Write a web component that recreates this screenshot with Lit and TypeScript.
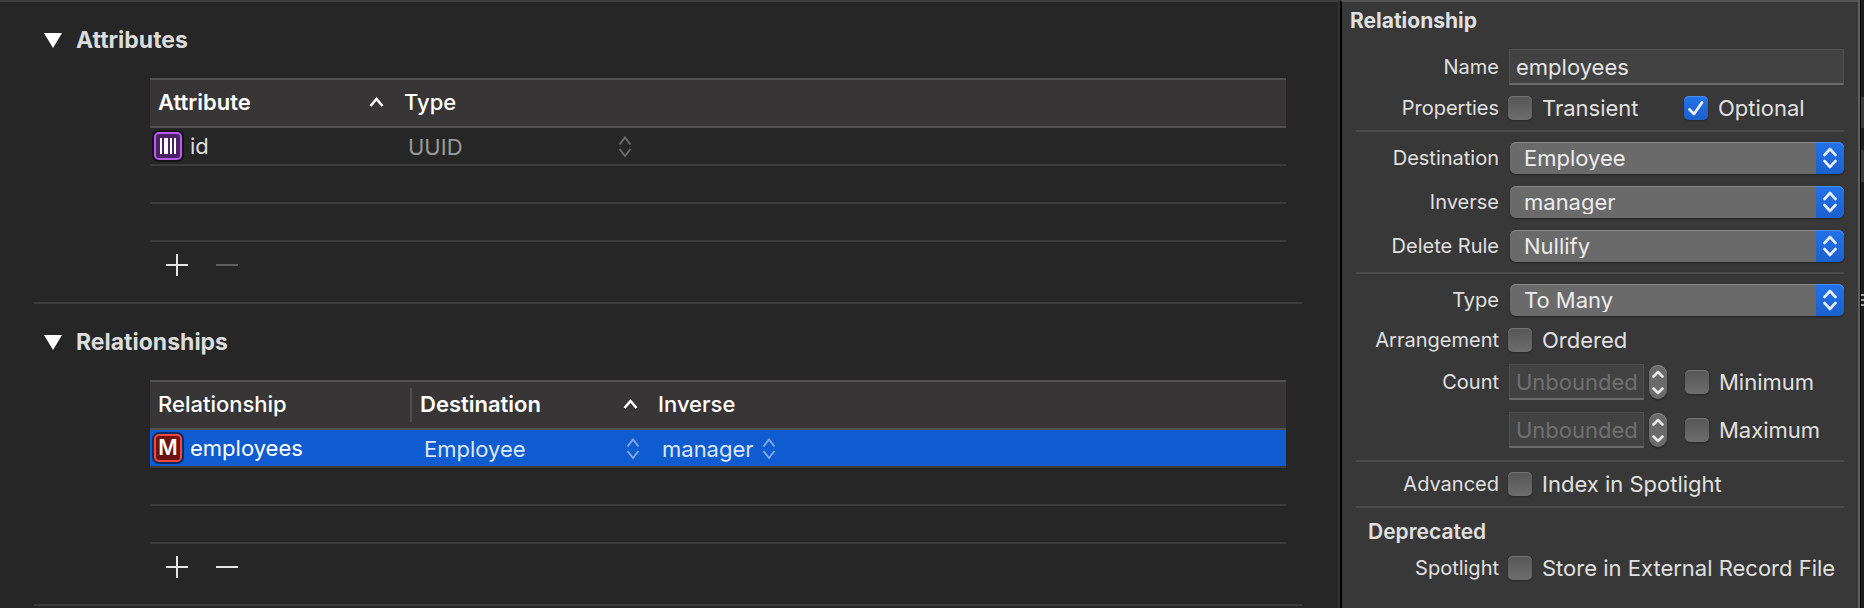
import { LitElement, html, css, svg, nothing } from "lit";
import { customElement, property, state } from "lit/decorators.js";

type Kind = "id" | "many";

const popupChevrons = html`<svg class="chevrons" viewBox="0 0 14 22" width="14" height="22" aria-hidden="true">
  <path d="M1.5 8.5 L7 1.5 L12.5 8.5 M1.5 13 L7 20 L12.5 13" />
</svg>`;

const sortMark = html`<svg class="sort" viewBox="0 0 15 10" width="15" height="10" aria-hidden="true">
  <path d="M1.5 9 L7.5 2 L13.5 9" />
</svg>`;

@customElement("kind-badge")
export class KindBadge extends LitElement {
  static styles = css`
    :host { display: block; flex: none; }
    .badge {
      box-sizing: border-box; width: 28px; height: 28px; border: 2px solid; border-radius: 5px;
      box-shadow: 0 0 0 2px rgba(0, 0, 0, 0.5);
      display: flex; align-items: center; justify-content: center;
      color: #fff; font: 600 21px/24px Inter, "Open Sans", sans-serif;
    }
    .id { border-color: #b95cf0; background: #4a2163; }
    .many { border-color: #fd453c; background: #6a1512; }
    .letter { color: #fff; }
    svg { display: block; }
  `;
  @property() kind: Kind = "id";
  render() {
    return this.kind === "id"
      ? html`<div class="badge id"><svg viewBox="0 0 16 16" width="16" height="16" fill="#fff" aria-hidden="true">
          ${svg`<rect width="2" height="16"/><rect x="4" width="4" height="16"/><rect x="10" width="2" height="16"/><rect x="14" width="2" height="16"/>`}
        </svg></div>`
      : html`<div class="badge many"><span class="letter">M</span></div>`;
  }
}

@customElement("entity-section")
export class EntitySection extends LitElement {
  static styles = css`
    :host { display: block; }
    .section { margin: 0 36px 0 34px; padding: 22px 0 26px; border-bottom: 2px solid #3c3c3c; }
    .heading {
      margin: 0 0 22px 10px; display: flex; align-items: center; gap: 14px; height: 32px;
      font-size: 23px; font-weight: 700; color: #dcdcdc;
    }
    .disclosure, .tool { border: 0; padding: 0; background: none; color: inherit; display: block; }
    .disclosure svg, .tool svg { display: block; }
    .body { margin: 0 16px 0 116px; }
    table { width: 100%; table-layout: fixed; border-collapse: separate; border-spacing: 0; }
    .narrow { width: 246px; }
    .wide { width: 262px; }
    .middle { width: 238px; }
    th {
      height: 46px; padding: 0 12px 0 8px; text-align: left; background: #383536; color: #fff;
      border-top: 2px solid #515051; border-bottom: 2px solid #515051;
      font-size: 22px; font-weight: 500;
    }
    .head {
      box-sizing: border-box; display: flex; align-items: center; justify-content: space-between;
      height: 34px; padding-bottom: 2px;
    }
    .sorted { font-weight: 600; }
    .ruled { padding-right: 0; }
    .ruled .head { border-right: 2px solid #515051; }
    td { height: 36px; padding: 0; border-bottom: 2px solid #3b3b3b; color: #dfdfdf; }
    .selected td { background: #0f5bd0; color: #fff; }
    .sort path { fill: none; stroke: #fff; stroke-width: 2.6; }
    .name { display: flex; align-items: center; gap: 8px; padding-left: 4px; height: 36px; }
    .popup { display: grid; align-items: center; margin: 2px 10px 0 12px; height: 34px; color: #9a9a9a; }
    .selected .popup { color: #dce7f8; }
    .popup > * { grid-area: 1 / 1; }
    .popup select {
      appearance: none; border: 0; margin: 0; padding: 0; background: none; color: inherit;
      font: inherit; width: 100%; min-width: 0; opacity: 1;
    }
    .chevrons { justify-self: end; pointer-events: none; }
    .chevrons path { fill: none; stroke: #6c6c6c; stroke-width: 2; }
    .selected .chevrons path { stroke: #7fa8e8; }
    .span-type { width: 224px; }
    .span-inverse { width: 114px; }
    .tools { display: flex; gap: 28px; padding: 12px 0 0 16px; color: #e6e6e6; }
    .tool:disabled { color: #5e5e5e; }
  `;
  @property() kind: Kind = "id";
  @state() private open = true;

  private cellPopup(label: string, value: string, span = "") {
    return html`<div class="popup ${span}">
      <select aria-label=${label}><option>${value}</option></select>${popupChevrons}
    </div>`;
  }

  private attributes() {
    return html`<table>
      <colgroup><col class="narrow" /><col /></colgroup>
      <thead><tr>
        <th><div class="head sorted">Attribute${sortMark}</div></th>
        <th><div class="head">Type</div></th>
      </tr></thead>
      <tbody>
        <tr><td><div class="name"><kind-badge kind="id"></kind-badge>id</div></td>
          <td>${this.cellPopup("Type", "UUID", "span-type")}</td></tr>
        <tr><td></td><td></td></tr>
        <tr><td></td><td></td></tr>
      </tbody>
    </table>`;
  }

  private relationships() {
    return html`<table>
      <colgroup><col class="wide" /><col class="middle" /><col /></colgroup>
      <thead><tr>
        <th class="ruled"><div class="head">Relationship</div></th>
        <th><div class="head sorted">Destination${sortMark}</div></th>
        <th><div class="head">Inverse</div></th>
      </tr></thead>
      <tbody>
        <tr class="selected"><td><div class="name"><kind-badge kind="many"></kind-badge>employees</div></td>
          <td>${this.cellPopup("Destination", "Employee")}</td>
          <td>${this.cellPopup("Inverse", "manager", "span-inverse")}</td></tr>
        <tr><td></td><td></td><td></td></tr>
        <tr><td></td><td></td><td></td></tr>
      </tbody>
    </table>`;
  }

  render() {
    const isId = this.kind === "id";
    return html`<section class="section">
      <h2 class="heading">
        <button class="disclosure" aria-label="Toggle section" aria-expanded=${this.open} @click=${() => (this.open = !this.open)}>
          <svg viewBox="0 0 18 15" width="18" height="15" aria-hidden="true"><path d="M0 0H18L9 15Z" fill="#fff" /></svg>
        </button>
        ${isId ? "Attributes" : "Relationships"}
      </h2>
      ${this.open
        ? html`<div class="body">
            ${isId ? this.attributes() : this.relationships()}
            <div class="tools">
              <button class="tool" aria-label="Add">
                <svg viewBox="0 0 22 22" width="22" height="22"><path d="M0 11H22M11 0V22" stroke="currentColor" stroke-width="2" /></svg>
              </button>
              <button class="tool" aria-label="Remove" ?disabled=${isId}>
                <svg viewBox="0 0 22 22" width="22" height="22"><path d="M0 11H22" stroke="currentColor" stroke-width="2" /></svg>
              </button>
            </div>
          </div>`
        : nothing}
    </section>`;
  }
}

@customElement("relationship-inspector")
export class RelationshipInspector extends LitElement {
  static styles = css`
    :host { display: block; color: #e0e0e0; line-height: 24px; }
    .title { margin: 0; padding: 6px 8px 0; font-size: 21px; line-height: 26px; font-weight: 700; }
    .group { margin: 0 14px; padding: 10px 0; border-bottom: 2px solid #4b4b4b; display: grid; gap: 12px; }
    .first { padding-top: 15px; gap: 11px; }
    .kind { padding-bottom: 12px; }
    .last { border: 0; gap: 10px; }
    .row { display: grid; grid-template-columns: 143px 1fr; column-gap: 10px; align-items: center; }
    .label { text-align: right; font-size: 20px; white-space: nowrap; }
    .controls { display: flex; align-items: center; }
    .field {
      box-sizing: border-box; height: 36px; width: 100%; min-width: 0; margin: 0; padding: 0 0 0 6px;
      background: #424242; border: 1px solid #505050; border-bottom: 2px solid #6b6b6b; border-radius: 0;
      color: #e4e4e4; font: inherit;
    }
    .field::placeholder { color: #707070; opacity: 1; }
    .count { width: 135px; flex: none; }
    .check { display: flex; align-items: center; gap: 10px; margin-left: -1px; flex: none; white-space: nowrap; }
    .check input {
      appearance: none; margin: 0; width: 24px; height: 24px; border-radius: 5px; flex: none;
      background: linear-gradient(#565656, #6d6d6d); box-shadow: 0 1px 2px rgba(0, 0, 0, 0.35), inset 0 1px 0 #757575;
      display: grid; grid-area: 1 / 1;
    }
    .check input:checked { background: linear-gradient(#2473ea, #1a5fcd); box-shadow: 0 1px 2px rgba(0, 0, 0, 0.35), inset 0 1px 0 #4a8cf0; }
    .box { display: grid; place-items: center; }
    .box svg { grid-area: 1 / 1; z-index: 1; pointer-events: none; }
    .pair { display: grid; grid-template-columns: 176px 1fr; width: 100%; }
    .deprecated { margin: 0 0 0 12px; font-size: 21px; line-height: 28px; font-weight: 600; }
    .popup { display: grid; width: 100%; padding-left: 1px; }
    .popup > * { grid-area: 1 / 1; }
    .popup select {
      appearance: none; box-sizing: border-box; width: 100%; height: 32px; margin: 0; padding: 0 36px 0 14px;
      border: 0; border-radius: 6px; background: #6a6a6a; color: #ececec; font: inherit;
      box-shadow: 0 1px 2px rgba(0, 0, 0, 0.4), inset 0 1px 0 #888;
    }
    .cap {
      justify-self: end; width: 28px; height: 32px; border-radius: 0 6px 6px 0; pointer-events: none; z-index: 1;
      background: linear-gradient(#2372e9, #1b60ce); box-shadow: inset 0 1px 0 #4a8cf0;
      display: grid; place-items: center;
    }
    .cap path, .stepper path { fill: none; stroke: #e8eefa; stroke-width: 2.6; stroke-linecap: round; stroke-linejoin: round; }
    .stepper {
      margin: 0 19px 0 5px; width: 18px; height: 34px; border-radius: 9px; background: #6a6a6a; flex: none;
      box-shadow: 0 1px 2px rgba(0, 0, 0, 0.4), inset 0 1px 0 #888; display: grid;
    }
    .step { border: 0; padding: 0; background: none; display: grid; place-items: center; min-height: 0; }
    .step path { stroke: #ececec; }
  `;

  private check(id: string, text: string, checked = false) {
    return html`<label class="check" for=${id}>
      <span class="box"><input type="checkbox" id=${id} .checked=${checked} />
        ${checked
          ? html`<svg viewBox="0 0 24 24" width="24" height="24" aria-hidden="true"><path d="M5.5 13.5 L10 18 L18 6.5" fill="none" stroke="#eaf2ff" stroke-width="2.8" stroke-linecap="round" stroke-linejoin="round" /></svg>`
          : nothing}</span>${text}</label>`;
  }

  private popup(id: string, label: string, value: string) {
    return html`<div class="row"><label class="label" for=${id}>${label}</label>
      <div class="controls"><div class="popup">
        <select id=${id}><option>${value}</option></select>
        <span class="cap"><svg viewBox="0 0 14 22" width="14" height="22" aria-hidden="true"><path d="M1.5 8 L7 2 L12.5 8 M1.5 14 L7 20 L12.5 14" /></svg></span>
      </div></div></div>`;
  }

  private bound(id: string, label: string, text: string) {
    return html`<div class="row"><label class="label" for=${id}>${label}</label>
      <div class="controls">
        <input class="field count" id=${id} aria-label="${text} count" placeholder="Unbounded" />
        <span class="stepper">
          <button class="step" aria-label="Increase ${text}"><svg viewBox="0 0 12 8" width="12" height="8"><path d="M1.5 6.5 L6 2 L10.5 6.5" /></svg></button>
          <button class="step" aria-label="Decrease ${text}"><svg viewBox="0 0 12 8" width="12" height="8"><path d="M1.5 1.5 L6 6 L10.5 1.5" /></svg></button>
        </span>
        ${this.check(`${id}-on`, text)}
      </div></div>`;
  }

  render() {
    return html`
      <h2 class="title">Relationship</h2>
      <div class="group first">
        <div class="row"><label class="label" for="name">Name</label>
          <div class="controls"><input class="field" id="name" .value=${"employees"} /></div></div>
        <div class="row"><span class="label">Properties</span>
          <div class="pair">${this.check("transient", "Transient")}${this.check("optional", "Optional", true)}</div></div>
      </div>
      <div class="group">
        ${this.popup("destination", "Destination", "Employee")}
        ${this.popup("inverse", "Inverse", "manager")}
        ${this.popup("delete-rule", "Delete Rule", "Nullify")}
      </div>
      <div class="group kind">
        ${this.popup("type", "Type", "To Many")}
        <div class="row"><span class="label">Arrangement</span>${this.check("ordered", "Ordered")}</div>
        ${this.bound("minimum", "Count", "Minimum")}
        ${this.bound("maximum", "", "Maximum")}
      </div>
      <div class="group">
        <div class="row"><span class="label">Advanced</span>${this.check("index", "Index in Spotlight")}</div>
      </div>
      <div class="group last">
        <h3 class="deprecated">Deprecated</h3>
        <div class="row"><span class="label">Spotlight</span>${this.check("external", "Store in External Record File")}</div>
      </div>`;
  }
}

@customElement("app-root")
export class AppRoot extends LitElement {
  static styles = css`
    :host {
      display: grid; grid-template-columns: minmax(0, 1fr) 518px 6px; min-height: 100vh; overflow: hidden;
      background: #262626; color: #dfdfdf; font: 400 22px/26px Inter, "Open Sans", sans-serif;
    }
    .editor { border-top: 2px solid #3d3d3d; border-right: 2px solid #333; }
    .inspector { border-top: 2px solid #525252; border-left: 2px solid #000; background: #383838; }
    .edge {
      border-left: 2px solid #5e5e5e; box-shadow: inset 1px 0 0 #000;
      background: linear-gradient(
        #1e1e1e 97px, #3c3c3c 97px 128px, #1e1e1e 128px 150px, #3c3c3c 150px 182px, #1e1e1e 182px 294px,
        #a0a0a0 294px 296px, #1e1e1e 296px 299px, #a0a0a0 299px 301px, #1e1e1e 301px 304px, #a0a0a0 304px 306px, #1e1e1e 306px
      );
    }
  `;
  render() {
    return html`
      <main class="editor">
        <entity-section kind="id"></entity-section>
        <entity-section kind="many"></entity-section>
      </main>
      <aside class="inspector"><relationship-inspector></relationship-inspector></aside>
      <div class="edge"></div>`;
  }
}
